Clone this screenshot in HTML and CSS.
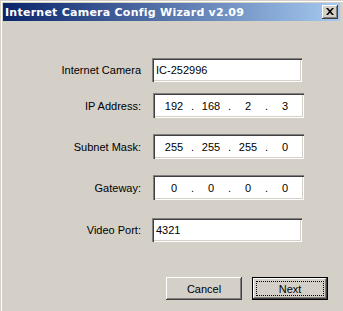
FILE: index.html
```html
<!DOCTYPE html>
<html lang="en">
<head>
    <meta charset="UTF-8">
    <title>Internet Camera Config Wizard v2.09</title>
    <link rel="stylesheet" href="styles.css">
</head>
<body>
    <div class="window">
        <div class="titlebar">
            <span class="title">Internet Camera Config Wizard v2.09</span>
            <button class="close-button" aria-label="Close">
                <svg width="8" height="7" viewBox="0 0 8 7">
                    <path d="M0 0h2l2 2.2 2-2.2h2l-3 3.5 3 3.5h-2l-2-2.2-2 2.2h-2l3-3.5z" fill="#000"/>
                </svg>
            </button>
        </div>

        <div class="client">
            <div class="form">
                <div class="row row-camera">
                    <label class="label">Internet Camera</label>
                    <div class="field field-text">IC-252996</div>
                </div>
                <div class="row row-ip">
                    <label class="label">IP Address:</label>
                    <div class="field field-ip">
                        <span class="octet">192</span><span class="dot">.</span>
                        <span class="octet">168</span><span class="dot">.</span>
                        <span class="octet">2</span><span class="dot">.</span>
                        <span class="octet">3</span>
                    </div>
                </div>
                <div class="row row-mask">
                    <label class="label">Subnet Mask:</label>
                    <div class="field field-ip">
                        <span class="octet">255</span><span class="dot">.</span>
                        <span class="octet">255</span><span class="dot">.</span>
                        <span class="octet">255</span><span class="dot">.</span>
                        <span class="octet">0</span>
                    </div>
                </div>
                <div class="row row-gateway">
                    <label class="label">Gateway:</label>
                    <div class="field field-ip">
                        <span class="octet">0</span><span class="dot">.</span>
                        <span class="octet">0</span><span class="dot">.</span>
                        <span class="octet">0</span><span class="dot">.</span>
                        <span class="octet">0</span>
                    </div>
                </div>
                <div class="row row-port">
                    <label class="label">Video Port:</label>
                    <div class="field field-text">4321</div>
                </div>
            </div>

            <div class="buttons">
                <button class="button">Cancel</button>
                <button class="button button-default"><span class="focus">Next</span></button>
            </div>
        </div>
    </div>
</body>
</html>
```

FILE: styles.css
```css
html, body {
    margin: 0;
    padding: 0;
}

body {
    background: #d4d0c8;
    font-family: "Liberation Sans", Arial, sans-serif;
    font-size: 11px;
    color: #000;
}

.window {
    width: 343px;
    height: 311px;
    box-sizing: border-box;
    padding: 3px 3px 0 3px;
    background: #d4d0c8;
    box-shadow: inset 1px 1px 0 #d4d0c8, inset 2px 2px 0 #ffffff;
}

.titlebar {
    height: 18px;
    display: flex;
    align-items: center;
    justify-content: space-between;
    padding: 0 2px 0 2px;
    background: linear-gradient(to right, #0a246a, #a6caf0);
}

.title {
    color: #fff;
    font-family: "DejaVu Sans", Verdana, sans-serif;
    font-weight: bold;
    font-size: 11px;
    letter-spacing: 0.25px;
    white-space: nowrap;
}

.close-button {
    width: 16px;
    height: 14px;
    padding: 0;
    border: none;
    background: #d4d0c8;
    display: flex;
    align-items: center;
    justify-content: center;
    box-shadow: inset -1px -1px #404040, inset 1px 1px #ffffff,
                inset -2px -2px #808080, inset 2px 2px #d4d0c8;
}

.close-button svg {
    display: block;
    margin: 0 1px 1px 0;
}

.form {
    display: flex;
    flex-direction: column;
    padding-top: 37px;
}

.row {
    display: flex;
    align-items: center;
    gap: 11px;
}

.row-ip {
    margin-top: 11px;
}

.row-mask,
.row-gateway {
    margin-top: 16px;
}

.row-port {
    margin-top: 18px;
}

.label {
    width: 138px;
    text-align: right;
}

.field {
    background: #fff;
    box-sizing: border-box;
    box-shadow: inset 1px 1px #808080, inset 2px 2px #404040,
                inset -1px -1px #ffffff, inset -2px -2px #d4d0c8;
    display: flex;
    align-items: center;
}

.field-text {
    width: 150px;
    height: 24px;
    padding: 0 4px;
}

.field-ip {
    width: 151px;
    height: 25px;
    margin-left: 1px;
    padding-left: 7px;
}

.octet {
    width: 28px;
    text-align: center;
}

.dot {
    width: 9px;
    text-align: center;
}

.buttons {
    display: flex;
    justify-content: flex-end;
    gap: 10px;
    margin-top: 35px;
    padding-right: 12px;
}

.button {
    width: 76px;
    height: 23px;
    padding: 0;
    border: none;
    background: #d4d0c8;
    font-family: "Liberation Sans", Arial, sans-serif;
    font-size: 11px;
    color: #000;
    box-shadow: inset -1px -1px #404040, inset 1px 1px #ffffff,
                inset -2px -2px #808080, inset 2px 2px #d4d0c8;
}

.button-default {
    border: 1px solid #000;
    box-shadow: inset -1px -1px #404040, inset 1px 1px #ffffff,
                inset -2px -2px #808080;
    display: flex;
    padding: 3px;
}

.focus {
    flex: 1;
    display: flex;
    align-items: center;
    justify-content: center;
    border: 1px dotted #000;
}
```
